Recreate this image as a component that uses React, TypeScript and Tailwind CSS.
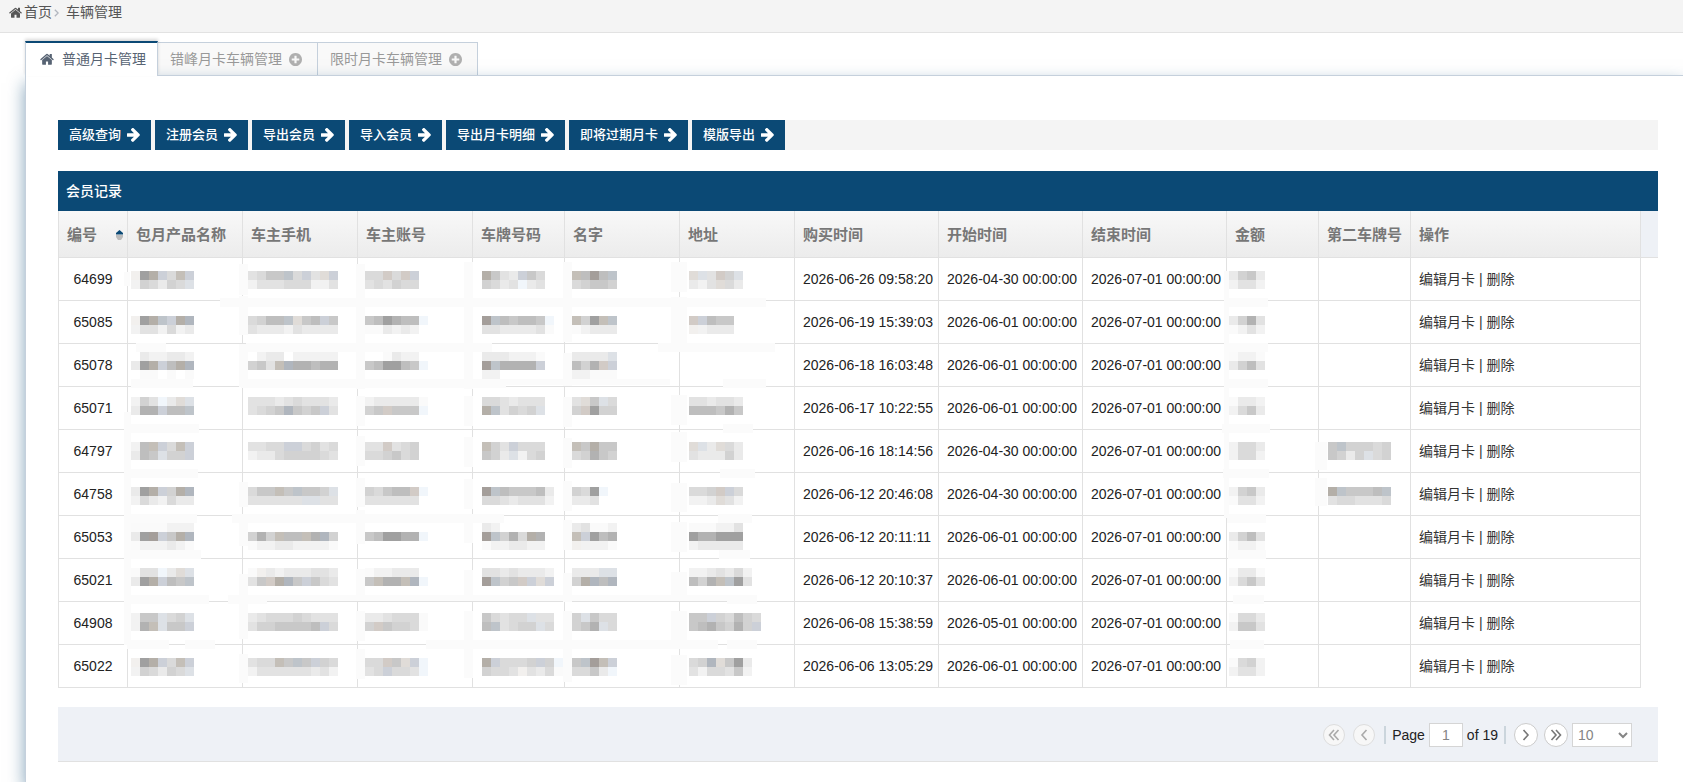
import { useState } from 'react';
import clsx from 'clsx';

interface Member {
  id: string;
  bought: string;
  start: string;
  end: string;
  // distance from the top of the row to the first line of tiles
  top: number;
  product: string[];
  phone: string[];
  account: string[];
  plate: string[];
  name: string[];
  address: string[];
  amount: string[];
  plate2?: string[];
}

const TILE = 9;

// one character = one tile, "." leaves a hole
const TILE_COLORS: Record<string, string> = {
  '0': '#fafafa',
  '1': '#f2f2f2',
  '2': '#eaeaea',
  '3': '#e2e2e2',
  '4': '#dadada',
  '5': '#d2d2d2',
  '6': '#c8c8c8',
  '7': '#bebebe',
  '8': '#b2b2b2',
  '9': '#a0a0a0',
  a: '#f1f6fb',
  b: '#dde1e6',
  c: '#ccd0d8',
  d: '#bec4ca',
  e: '#b0b6be',
  m: '#f2f0ee',
  n: '#e0dcd8',
  o: '#d2cbc6',
  p: '#c4bfb8',
  q: '#b4afa8',
  r: '#a49e9a',
};

const members: Member[] = [
  {
    id: '64699', bought: '2026-06-26 09:58:20', start: '2026-04-30 00:00:00', end: '2026-07-01 00:00:00', top: 13,
    product: ['m9qc4pc', '154254b'], phone: ['3466d4c3nc', '1333444113'], account: ['44o4oc', '343544'],
    plate: ['q632c64', '5423a23'], name: ['p7r7d', '45665'], address: ['nb3o5b', '213n42'], amount: ['2562', '1331'],
  },
  {
    id: '65085', bought: '2026-06-19 15:39:03', start: '2026-06-01 00:00:00', end: '2026-07-01 00:00:00', top: 15,
    product: ['m9qdcqe', '1331412'], phone: ['4577dn67c6', '3222132222'], account: ['679877a', '002121'],
    plate: ['rd76776a', '33222230'], name: ['p59pd', '01222'], address: ['oc766', 'm1222'], amount: ['2583', '0131'],
  },
  {
    id: '65078', bought: '2026-06-18 16:03:48', start: '2026-06-01 00:00:00', end: '2026-07-01 00:00:00', top: 8,
    product: ['.211221', '29qc7qe', '.00.0.0'], phone: ['.122.11111', '563pe88788'], account: ['..0211', '679976a'],
    plate: ['2221110', 'rd8888c', '11'], name: ['2222b', '758oc', '11000'], address: [], amount: ['0110', '2573'],
  },
  {
    id: '65071', bought: '2026-06-17 10:22:55', start: '2026-06-01 00:00:00', end: '2026-07-01 00:00:00', top: 10,
    product: ['153a2nb', '288c77d'], phone: ['3332343332', '3456e656c3'], account: ['1222220', '56o666a'],
    plate: ['4432333', 'qd3545b'], name: ['3n6b4', '5o955'], address: ['332332', '777686'], amount: ['0221', '1462'],
  },
  {
    id: '64797', bought: '2026-06-16 18:14:56', start: '2026-04-30 00:00:00', end: '2026-07-01 00:00:00', top: 12,
    product: ['17pc4pc', '276b55c'], phone: ['3344cc4534', '1224555543'], account: ['33o345', '445645'],
    plate: ['p53c444', '652b145'], name: ['p6q66', '45865'], address: ['nb2n42', '322252'], amount: ['1442', '1441'],
    plate2: ['6d55545', '6525b45'],
  },
  {
    id: '64758', bought: '2026-06-12 20:46:08', start: '2026-04-30 00:00:00', end: '2026-07-01 00:00:00', top: 14,
    product: ['29qc5qe', '1421422'], phone: ['466p6d665b', '333333bb33'], account: ['54677oa', '333333'],
    plate: ['rd766672', '44323331'], name: ['549a', '223'], address: ['445oc4', '112n31'], amount: ['1562', '0331'],
    plate2: ['qd6667d', '3443334'],
  },
  {
    id: '65053', bought: '2026-06-12 20:11:11', start: '2026-06-01 00:00:00', end: '2026-07-01 00:00:00', top: 7,
    product: ['0000111', '29rc6qe', '0111210'], phone: ['', '585p77p8e5', '0112211110'], account: ['', '679988a'],
    plate: ['21', 'rd584q8', '0112211'], name: ['23001', 'pc978', 'm1110'], address: ['000113', '988999', '122222'],
    amount: ['', '2573', '0110'],
  },
  {
    id: '65021', bought: '2026-06-12 20:10:37', start: '2026-06-01 00:00:00', end: '2026-07-01 00:00:00', top: 9,
    product: ['033a2nb', '29qc76d'], phone: ['0m21222332', '36oqe6c643'], account: ['011222', '6p88pea'],
    plate: ['33232221', 'rd56ocnc'], name: ['222bb', '5qe7e'], address: ['1123241', '758pd93'], amount: ['0220', '1463'],
  },
  {
    id: '64908', bought: '2026-06-08 15:38:59', start: '2026-05-01 00:00:00', end: '2026-07-01 00:00:00', top: 11,
    product: ['166b45b', '18pb66c'], phone: ['2344454333', '35566667c4'], account: ['2234440', '5o65540'],
    plate: ['64344b33', '7d3455b4'], name: ['5b644', '568b4'], address: ['66c54754', '6786585c'], amount: ['0442', '1663'],
  },
  {
    id: '65022', bought: '2026-06-06 13:05:29', start: '2026-06-01 00:00:00', end: '2026-07-01 00:00:00', top: 13,
    product: ['m9qc4pc', '154254b'], phone: ['344p6d6c54', '1333333231'], account: ['44o6nca', '34c443a'],
    plate: ['qc4445c5a', '5443m3240'], name: ['6drpc', '4462a'], address: ['45en692', '3144361'], amount: ['0451', '1331'],
  },
];

// x, y, width, height of the eraser marks over the grid lines
const smears: number[][] = [
  // vertical
  [66, 14, 6, 14], [66, 154, 7, 233],
  [181, 6, 9, 31], [181, 38, 9, 39], [181, 86, 9, 43], [181, 224, 9, 25], [181, 256, 9, 32], [181, 316, 9, 65], [181, 396, 9, 29],
  [298, 6, 9, 125], [298, 138, 9, 30], [298, 178, 9, 30], [298, 220, 9, 29], [298, 252, 9, 34], [298, 311, 9, 29], [298, 353, 9, 30], [298, 391, 9, 30],
  [406, 4, 9, 127], [406, 138, 9, 30], [406, 179, 9, 30], [406, 221, 9, 30], [406, 256, 9, 29], [406, 312, 9, 30], [406, 353, 9, 67],
  [505, 4, 9, 80], [505, 95, 9, 33], [505, 139, 9, 30], [505, 180, 9, 30], [505, 223, 9, 30], [505, 262, 9, 30], [505, 315, 9, 29], [505, 353, 9, 71],
  [613, 4, 16, 30], [613, 39, 16, 48], [613, 137, 16, 30], [613, 174, 16, 30], [613, 225, 16, 29], [613, 264, 16, 30], [613, 314, 16, 28], [613, 353, 16, 30], [613, 397, 16, 30],
  [1166, 13, 5, 247], [1257, 184, 12, 28], [1257, 220, 12, 28],
  // horizontal
  [162, 40, 546, 9], [78, 85, 30, 9], [188, 85, 246, 9], [600, 85, 117, 9],
  [73, 121, 62, 9], [183, 121, 265, 9], [448, 121, 164, 6], [665, 121, 43, 9],
  [69, 166, 72, 9], [665, 166, 30, 9], [66, 211, 74, 9], [662, 211, 35, 9],
  [66, 256, 73, 9], [174, 256, 272, 9], [660, 256, 34, 9],
  [67, 292, 76, 9], [661, 292, 31, 9],
  [69, 337, 82, 9], [170, 337, 39, 9], [209, 337, 460, 6], [669, 337, 30, 9],
  [69, 382, 42, 9], [127, 382, 30, 9], [368, 382, 292, 9], [669, 382, 30, 9],
  [1166, 40, 44, 9], [1166, 85, 44, 9], [1166, 121, 44, 9], [1164, 166, 48, 9], [1165, 211, 46, 9],
  [1169, 256, 39, 9], [1170, 292, 38, 9], [1175, 337, 31, 9], [1172, 382, 34, 9],
];

const columns = [
  { title: '编号', col: 'w-[70px]' },
  { title: '包月产品名称', col: 'w-[115px]' },
  { title: '车主手机', col: 'w-[115px]' },
  { title: '车主账号', col: 'w-[115px]' },
  { title: '车牌号码', col: 'w-[92px]' },
  { title: '名字', col: 'w-[115px]' },
  { title: '地址', col: 'w-[115px]' },
  { title: '购买时间', col: 'w-[144px]' },
  { title: '开始时间', col: 'w-[144px]' },
  { title: '结束时间', col: 'w-[144px]' },
  { title: '金额', col: 'w-[92px]' },
  { title: '第二车牌号', col: 'w-[92px]' },
  { title: '操作', col: '' },
];

const actions = ['高级查询', '注册会员', '导出会员', '导入会员', '导出月卡明细', '即将过期月卡', '模版导出'];

const HomeIcon = ({ className }: { className?: string }) => (
  <svg viewBox="64 190 1664 1346" fill="currentColor" className={className} aria-hidden="true">
    <path d="M1472 992v480q0 26-19 45t-45 19h-384v-384h-256v384h-384q-26 0-45-19t-19-45v-480q0-1 .5-3t.5-3l575-474 575 474q1 2 1 6zm223-69l-62 74q-8 9-21 11h-3q-13 0-21-7l-692-577-692 577q-12 8-24 7-13-2-21-11l-62-74q-8-10-7-23.5t11-21.5l719-599q32-26 76-26t76 26l244 204v-195q0-14 9-23t23-9h192q14 0 23 9t9 23v408l219 182q10 8 11 21.5t-7 23.5z" />
  </svg>
);

const PlusCircleIcon = () => (
  <svg viewBox="128 128 1536 1536" fill="currentColor" className="h-[13px] w-[13px] text-[#b0b0b0]" aria-hidden="true">
    <path d="M1344 960v-128q0-26-19-45t-45-19h-256v-256q0-26-19-45t-45-19h-128q-26 0-45 19t-19 45v256h-256q-26 0-45 19t-19 45v128q0 26 19 45t45 19h256v256q0 26 19 45t45 19h128q26 0 45-19t19-45v-256h256q26 0 45-19t19-45zm320-64q0 209-103 385.5t-279.5 279.5-385.5 103-385.5-103-279.5-279.5-103-385.5 103-385.5 279.5-279.5 385.5-103 385.5 103 279.5 279.5 103 385.5z" />
  </svg>
);

const ArrowIcon = () => (
  <svg viewBox="192 190 1410 1560" fill="currentColor" className="h-[14px] w-[13px]" aria-hidden="true">
    <path d="M1600 960q0 54-37 91l-651 651q-39 37-91 37-51 0-90-37l-75-75q-38-38-38-91t38-91l293-293h-704q-52 0-84.5-37.5t-32.5-90.5v-128q0-53 32.5-90.5t84.5-37.5h704l-293-294q-38-36-38-90t38-90l75-75q38-38 90-38 53 0 91 38l651 651q37 35 37 90z" />
  </svg>
);

function PagerIcon({ d }: { d: string }) {
  return (
    <svg viewBox="0 0 12 12" className="h-3 w-3" fill="none" stroke="currentColor" strokeWidth="1.6" aria-hidden="true">
      <path d={d} />
    </svg>
  );
}

function Mosaic({ lines, x, y }: { lines: string[]; x: number; y: number }) {
  return (
    <svg className="block h-[42px] w-full overflow-visible" shapeRendering="crispEdges" aria-hidden="true">
      {lines.map((line, row) =>
        line.split('').map((tile, i) =>
          tile === '.' ? null : (
            <rect
              key={`${row}-${i}`}
              x={x + i * TILE}
              y={y + row * TILE}
              width={TILE}
              height={TILE}
              fill={TILE_COLORS[tile]}
            />
          )
        )
      )}
    </svg>
  );
}

const cell = 'h-[43px] border-r border-b border-[#e1e1e1] p-0';

function MemberRow({ member }: { member: Member }) {
  return (
    <tr>
      <td className={clsx(cell, 'border-l text-center')}>{member.id}</td>
      <td className={cell}><Mosaic lines={member.product} x={3} y={member.top} /></td>
      <td className={cell}><Mosaic lines={member.phone} x={5} y={member.top} /></td>
      <td className={cell}><Mosaic lines={member.account} x={7} y={member.top} /></td>
      <td className={cell}><Mosaic lines={member.plate} x={9} y={member.top} /></td>
      <td className={cell}><Mosaic lines={member.name} x={7} y={member.top} /></td>
      <td className={cell}><Mosaic lines={member.address} x={9} y={member.top} /></td>
      <td className={clsx(cell, 'pl-2 whitespace-nowrap')}>{member.bought}</td>
      <td className={clsx(cell, 'pl-2 whitespace-nowrap')}>{member.start}</td>
      <td className={clsx(cell, 'pl-2 whitespace-nowrap')}>{member.end}</td>
      <td className={cell}><Mosaic lines={member.amount} x={2} y={member.top} /></td>
      <td className={cell}>{member.plate2 && <Mosaic lines={member.plate2} x={9} y={member.top} />}</td>
      <td className={clsx(cell, 'pl-2 text-[#333]')}>
        <a href="#edit">编辑月卡</a> | <a href="#delete">删除</a>
      </td>
    </tr>
  );
}

export default function App() {
  const [page, setPage] = useState('1');
  const [pageSize, setPageSize] = useState('10');

  return (
    <div className="flex min-h-screen flex-col overflow-hidden bg-white font-['Liberation_Sans','Noto_Sans_CJK_SC',sans-serif] text-sm text-[#222]">
      <nav className="flex h-[33px] items-start border-b border-[#e2e2e2] bg-[#f4f4f4] pl-[9px] leading-6 text-[#555]">
        <a href="#home" className="flex items-center gap-[2px]">
          <HomeIcon className="h-[11px] w-[13px]" />
          首页
        </a>
        <svg viewBox="0 0 6 10" className="mt-2 ml-[2px] h-[10px] w-[5px]" fill="none" stroke="#b2b6bf" strokeWidth="1.6" aria-hidden="true">
          <path d="M1 1l4 4-4 4" />
        </svg>
        <span className="ml-[7px]">车辆管理</span>
      </nav>

      <div className="mt-2 ml-[25px] flex items-end" role="tablist">
        <button
          type="button"
          role="tab"
          aria-selected="true"
          className="relative z-10 -mb-px flex h-[35px] items-center gap-2 border-x border-t-2 border-x-[#c5d0dc] border-t-[#0b4975] bg-white pr-[11px] pb-[2px] pl-[14px] text-[#576373] shadow-[0_-2px_3px_rgba(0,0,0,0.15)]"
        >
          <HomeIcon className="h-3 w-[14px]" />
          普通月卡管理
        </button>
        {['错峰月卡车辆管理', '限时月卡车辆管理'].map((tab) => (
          <button
            key={tab}
            type="button"
            role="tab"
            aria-selected="false"
            className="flex h-[33px] items-center gap-[7px] border-t border-r border-[#c5d0dc] bg-[#f9f9f9] pr-[15px] pl-3 text-[#999]"
          >
            {tab}
            <PlusCircleIcon />
          </button>
        ))}
      </div>

      <main className="relative ml-[25px] flex-1 border-t border-l border-[#c5d0dc] bg-white pt-11 pr-[25px] pb-5 pl-8 shadow-[0_8px_16px_rgba(11,73,117,0.5)]">
        <div className="flex gap-1 bg-[#f4f4f4]">
          {actions.map((action) => (
            <button
              key={action}
              type="button"
              className="flex h-[30px] items-center gap-[6px] bg-[#0b4975] px-[11px] text-[13px] font-medium text-white"
            >
              {action}
              <ArrowIcon />
            </button>
          ))}
        </div>

        <h2 className="mt-[21px] h-10 bg-[#0b4975] pl-2 leading-10 font-medium text-white">会员记录</h2>

        <div className="relative flex items-start">
          <table className="min-w-0 flex-1 table-fixed border-separate border-spacing-0">
            <colgroup>
              {columns.map((column) => (
                <col key={column.title} className={column.col} />
              ))}
            </colgroup>
            <thead>
              <tr>
                {columns.map((column, i) => (
                  <th
                    key={column.title}
                    className={clsx(
                      'h-[47px] border-r border-b border-[#e1e1e1] bg-linear-to-b from-[#f8f8f8] to-[#ececec] p-0 pt-[2px] pl-2 text-left text-[15px] font-bold whitespace-nowrap text-[#777]',
                      i === 0 && 'border-l'
                    )}
                  >
                    {i === 0 ? (
                      <span className="flex items-center justify-between pr-1">
                        {column.title}
                        <svg viewBox="0 0 7 10" className="h-[10px] w-[7px]" aria-hidden="true">
                          <path d="M3.5 0L7 3v1.500H0V3z" fill="#0b4975" />
                          <path d="M0 5h7v2L5 10H2L0 7z" fill="#bbb" />
                        </svg>
                      </span>
                    ) : (
                      column.title
                    )}
                  </th>
                ))}
              </tr>
            </thead>
            <tbody>
              {members.map((member) => (
                <MemberRow key={member.id} member={member} />
              ))}
            </tbody>
          </table>
          <div className="h-[47px] w-[17px] border-b border-[#e1e1e1] bg-[#eef1f6]" />
          <svg
            className="pointer-events-none absolute top-[47px] left-0 h-[430px] w-full"
            shapeRendering="crispEdges"
            fill="#fbfbfb"
            aria-hidden="true"
          >
            {smears.map(([x, y, width, height]) => (
              <rect key={`${x}-${y}`} x={x} y={y} width={width} height={height} />
            ))}
          </svg>
        </div>

        <div className="mt-[19px] flex h-[55px] items-center justify-end border-b border-[#e1e1e1] bg-[#eef1f6] pt-[2px] pr-[26px]">
          <button type="button" disabled aria-label="First page" className="flex h-[22px] w-[22px] items-center justify-center rounded-full border border-[#ddd] bg-[#f7f7f7] text-[#aaa]">
            <PagerIcon d="M6 1L1.500 6L6 11M10.500 1L6 6L10.500 11" />
          </button>
          <button type="button" disabled aria-label="Previous page" className="ml-2 flex h-[22px] w-[22px] items-center justify-center rounded-full border border-[#ddd] bg-[#f7f7f7] text-[#aaa]">
            <PagerIcon d="M8.500 1L4 6L8.500 11" />
          </button>
          <span className="ml-[9px] h-[18px] w-[2px] bg-[#cbd5dc]" />
          <label htmlFor="page" className="ml-[6px]">Page</label>
          <input
            id="page"
            value={page}
            onChange={(e) => setPage(e.target.value)}
            className="ml-1 h-6 w-[34px] border border-[#d5d5d5] bg-white text-center text-[#858585]"
          />
          <span className="ml-1">of 19</span>
          <span className="ml-[6px] h-[18px] w-[2px] bg-[#cbd5dc]" />
          <button type="button" aria-label="Next page" className="ml-2 flex h-6 w-6 items-center justify-center rounded-full border border-[#ccc] bg-white text-[#777]">
            <PagerIcon d="M3.500 1L8 6L3.500 11" />
          </button>
          <button type="button" aria-label="Last page" className="ml-[6px] flex h-6 w-6 items-center justify-center rounded-full border border-[#ccc] bg-white text-[#777]">
            <PagerIcon d="M1.500 1L6 6L1.500 11M6 1L10.500 6L6 11" />
          </button>
          <select
            aria-label="Rows per page"
            value={pageSize}
            onChange={(e) => setPageSize(e.target.value)}
            className="ml-1 h-6 w-[60px] border border-[#d5d5d5] bg-white pl-px text-[#858585]"
          >
            <option>10</option>
            <option>20</option>
            <option>30</option>
          </select>
        </div>
      </main>
    </div>
  );
}
